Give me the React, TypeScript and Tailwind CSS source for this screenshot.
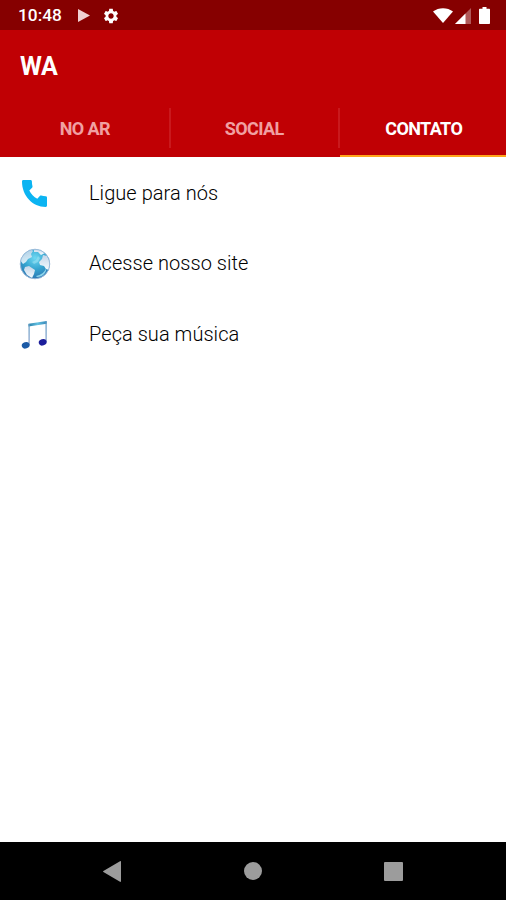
import React from 'react';

interface TabProps {
  label: string;
  active?: boolean;
  divider?: boolean;
}

const Tab: React.FC<TabProps> = ({ label, active, divider }) => {
  return (
    <button
      className={`flex w-[169.500px] shrink-0 flex-col border-b-2 text-[18px] font-bold tracking-[-0.6px] ${
        active ? 'border-[#ffa51a] text-white' : 'border-[#c00004] text-[#f0a0a2]'
      }`}
    >
      <span
        className={`mt-[8px] flex h-[40px] w-full items-center justify-center border-r-2 ${
          divider ? 'border-[#c9191d]' : 'border-transparent'
        }`}
      >
        {label}
      </span>
    </button>
  );
};

interface ContactRowProps {
  label: string;
  children: React.ReactNode;
}

const ContactRow: React.FC<ContactRowProps> = ({ label, children }) => {
  return (
    <li className="flex h-[70.500px] items-center pl-[18px]">
      <span className="mr-[38px] flex h-9 w-[33px] items-center justify-center">{children}</span>
      <span className="-mt-px text-[20px] font-light tracking-[0.05px] text-black">{label}</span>
    </li>
  );
};

const PhoneIcon = () => (
  <svg className="h-[27px] w-[25px]" viewBox="0 0 25 27" fill="#0bb4f2">
    <path d="M1.300 0h7.200c.8 0 1.400.6 1.400 1.400 0 1.900.2 3.300.6 4.900.1.600 0 1-.4 1.400L7.300 10.400c1.700 3.500 4.500 6.300 8 8.300l2.500-2.700c.4-.4.9-.5 1.400-.4 1.500.5 3 .7 4.500.7.800 0 1.300.6 1.300 1.400v7.900c0 .8-.5 1.400-1.300 1.400C10.600 27 0 15.600 0 1.500 0 .6.500 0 1.300 0z" />
  </svg>
);

const GlobeIcon = () => (
  <svg className="h-[32px] w-[32px] shrink-0" viewBox="0 0 32 32">
    <defs>
      <radialGradient id="sea" cx="0.5" cy="0.3" r="0.75">
        <stop offset="0" stopColor="#6fd8f2" />
        <stop offset="0.5" stopColor="#36a5d0" />
        <stop offset="1" stopColor="#2a6fae" />
      </radialGradient>
      <linearGradient id="land" x1="0" y1="0" x2="0" y2="1">
        <stop offset="0" stopColor="#c4d5e8" />
        <stop offset="1" stopColor="#f4fbff" />
      </linearGradient>
      <clipPath id="ball">
        <circle cx="16" cy="16" r="14.600" />
      </clipPath>
    </defs>
    <circle cx="16" cy="16" r="14.800" fill="url(#sea)" />
    <g clipPath="url(#ball)" fill="url(#land)">
      <path d="M1 12C3 6 7 2 12 1l2 2-2 3 1 3-4 2-2 3-3 2z" opacity="0.85" />
      <path d="M15 1l7 0 4 4-4 2-3-3-4 0z" />
      <path d="M6 19l4-1 6 4-1 4-2 4-5-3-3-5z" />
      <path d="M24 7l4 1 4 8-2 6-3-1-2-3-4-1-1-3 3-3z" />
      <path d="M13 14l4-2 2-4 2 2-2 4-4 2z" fill="#a8e8f6" opacity="0.5" />
    </g>
    <path d="M17 28c5-1 9-4 10-8 1 4-3 9-9 9z" fill="#a5e9f6" opacity="0.8" />
    <circle cx="16" cy="16" r="14.800" fill="none" stroke="#9db9d8" strokeWidth="0.900" />
  </svg>
);

const MusicIcon = () => (
  <svg className="h-[32px] w-[30px] shrink-0" viewBox="0 0 30 32">
    <defs>
      <linearGradient id="beam" x1="0" y1="0" x2="1" y2="0">
        <stop offset="0" stopColor="#287fa9" />
        <stop offset="0.5" stopColor="#61bfe0" />
        <stop offset="1" stopColor="#3587b8" />
      </linearGradient>
      <linearGradient id="stem" x1="0" y1="0" x2="0" y2="1">
        <stop offset="0" stopColor="#5c9cc4" />
        <stop offset="1" stopColor="#8aa0cc" />
      </linearGradient>
    </defs>
    <path d="M8.500 5.700 26.700 3v2.800L8.500 8.500z" fill="url(#beam)" />
    <path d="M8.500 6h1.200v21H8.500zM25.500 3.500h1.200V24h-1.200z" fill="url(#stem)" />
    <ellipse cx="5.700" cy="27.300" rx="4" ry="3.200" transform="rotate(-18 5.700 27.300)" fill="#1b5aa6" />
    <ellipse cx="22.700" cy="24.300" rx="4" ry="3.200" transform="rotate(-18 22.700 24.300)" fill="#1c1e9b" />
  </svg>
);

const StatusBar = () => {
  return (
    <div className="flex h-[30px] items-center bg-[#860000] pl-[18px] pr-[16px] pt-px text-white">
      <span className="w-[60px] pt-px text-[17.300px] font-medium leading-none">10:48</span>
      <svg className="h-[13px] w-[12px]" viewBox="0 0 12 13" fill="#f0d0d2">
        <path d="M0 0 12 6.500 0 13z" />
      </svg>
      <svg className="ml-[12px] h-[18px] w-[18px]" viewBox="0 0 24 24" fill="currentColor">
        <path d="M19.14 12.94c.04-.3.06-.61.06-.94 0-.32-.02-.64-.07-.94l2.03-1.58c.18-.14.23-.41.12-.61l-1.92-3.32c-.12-.22-.37-.29-.59-.22l-2.39.96c-.5-.38-1.03-.7-1.62-.94l-.36-2.54c-.04-.24-.24-.41-.48-.41h-3.84c-.24 0-.43.17-.47.41l-.36 2.54c-.59.24-1.13.57-1.62.94l-2.39-.96c-.22-.08-.47 0-.59.22L2.74 8.87c-.12.21-.08.47.12.61l2.03 1.58c-.05.3-.09.63-.09.94s.02.64.07.94l-2.03 1.58c-.18.14-.23.41-.12.61l1.92 3.32c.12.22.37.29.59.22l2.39-.96c.5.38 1.03.7 1.62.94l.36 2.54c.05.24.24.41.48.41h3.84c.24 0 .44-.17.47-.41l.36-2.54c.59-.24 1.13-.56 1.62-.94l2.39.96c.22.08.47 0 .59-.22l1.92-3.32c.12-.22.07-.47-.12-.61l-2.01-1.58zM12 15.6c-1.98 0-3.6-1.62-3.6-3.6s1.62-3.6 3.6-3.6 3.6 1.62 3.6 3.6-1.62 3.6-3.6 3.6z" />
      </svg>
      <div className="ml-auto flex items-center">
        <svg className="h-[15px] w-[20px]" viewBox="0 0 20 15" fill="currentColor">
          <path d="M10 15 0 3.600C5.500-.9 14.500-.9 20 3.600z" />
        </svg>
        <svg className="ml-[2px] h-[16px] w-[16px]" viewBox="0 0 16 16" fill="currentColor">
          <path d="M0 16 16 0v16z" opacity="0.35" />
          <path d="M0 16 10.500 5.500V16z" />
        </svg>
        <svg className="ml-[8px] h-[17px] w-[11px]" viewBox="0 0 11 17" fill="currentColor">
          <path d="M3.500 0h4v1.700H10c.6 0 1 .4 1 1V16c0 .6-.4 1-1 1H1c-.6 0-1-.4-1-1V2.700c0-.6.4-1 1-1h2.500z" />
        </svg>
      </div>
    </div>
  );
};

const NavBar = () => {
  return (
    <nav className="flex h-[58px] items-center bg-black pl-[103px] pr-[103px]">
      <svg className="h-[21px] w-[18px]" viewBox="0 0 18 21" fill="#9c9c9c">
        <path d="M18 .8v19.400c0 .6-.5.900-1 .600L.4 11c-.5-.3-.5-.8 0-1.100L17 .2c.5-.3 1 0 1 .6z" />
      </svg>
      <span className="ml-[123px] h-[18px] w-[18px] rounded-full bg-[#9c9c9c]" />
      <span className="ml-auto h-[19px] w-[19px] rounded-[1px] bg-[#9c9c9c]" />
    </nav>
  );
};

const App: React.FC = () => {
  return (
    <div className="flex h-[900px] w-[506px] flex-col overflow-hidden bg-white font-['Roboto',sans-serif]">
      <StatusBar />
      <header className="overflow-hidden bg-[#c00004]">
        <h1 className="flex h-[70px] items-center pl-[20px] pt-[3px] text-[25px] font-bold tracking-[-0.3px] text-white">
          WA
        </h1>
        <div className="flex h-[57px] pl-px">
          <Tab label="NO AR" divider />
          <Tab label="SOCIAL" divider />
          <Tab label="CONTATO" active />
        </div>
      </header>
      <ul className="flex-1 pt-px">
        <ContactRow label="Ligue para nós">
          <PhoneIcon />
        </ContactRow>
        <ContactRow label="Acesse nosso site">
          <GlobeIcon />
        </ContactRow>
        <ContactRow label="Peça sua música">
          <MusicIcon />
        </ContactRow>
      </ul>
      <NavBar />
    </div>
  );
};

export default App;
